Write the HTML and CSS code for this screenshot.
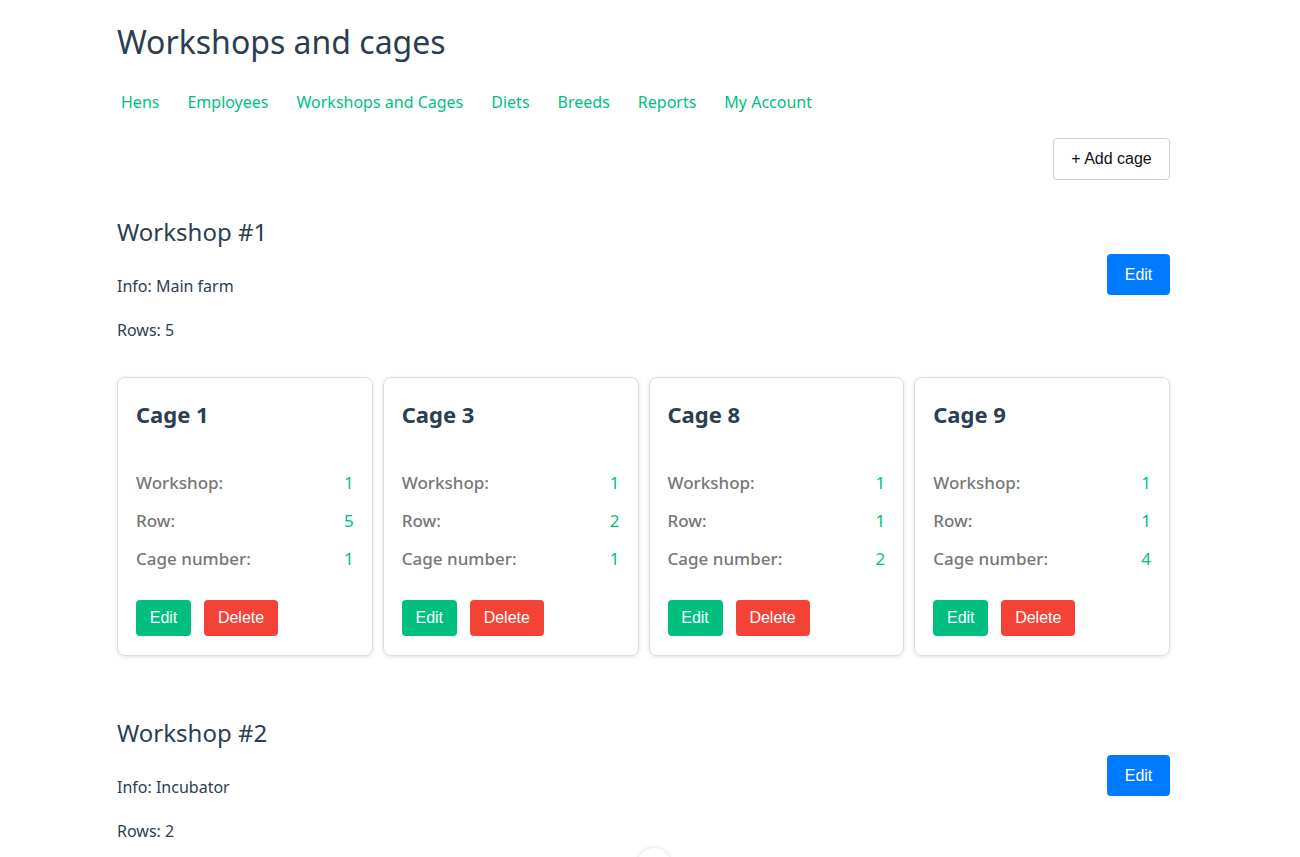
FILE: index.html
```html
<!DOCTYPE html>
<html lang="en">
<head>
<meta charset="utf-8">
<title>Workshops and cages</title>
<link rel="stylesheet" href="styles.css">
</head>
<body>
<div class="page">
  <h1 class="title">Workshops and cages</h1>
  <nav class="nav">
    <a href="#">Hens</a>
    <a href="#">Employees</a>
    <a href="#">Workshops and Cages</a>
    <a href="#">Diets</a>
    <a href="#">Breeds</a>
    <a href="#">Reports</a>
    <a href="#">My Account</a>
  </nav>
  <div class="toolbar">
    <button class="btn btn-outline">+ Add cage</button>
  </div>

  <section class="workshop">
    <div class="ws-head">
      <div class="ws-info">
        <h2 class="ws-title">Workshop #1</h2>
        <p class="ws-line">Info: Main farm</p>
        <p class="ws-line">Rows: 5</p>
      </div>
      <button class="btn btn-blue">Edit</button>
    </div>
    <div class="cages">
      <div class="card">
        <h3 class="card-title">Cage 1</h3>
        <div class="field"><span class="label">Workshop:</span><span class="value">1</span></div>
        <div class="field"><span class="label">Row:</span><span class="value">5</span></div>
        <div class="field"><span class="label">Cage number:</span><span class="value">1</span></div>
        <div class="actions"><button class="btn btn-green">Edit</button><button class="btn btn-red">Delete</button></div>
      </div>
      <div class="card">
        <h3 class="card-title">Cage 3</h3>
        <div class="field"><span class="label">Workshop:</span><span class="value">1</span></div>
        <div class="field"><span class="label">Row:</span><span class="value">2</span></div>
        <div class="field"><span class="label">Cage number:</span><span class="value">1</span></div>
        <div class="actions"><button class="btn btn-green">Edit</button><button class="btn btn-red">Delete</button></div>
      </div>
      <div class="card">
        <h3 class="card-title">Cage 8</h3>
        <div class="field"><span class="label">Workshop:</span><span class="value">1</span></div>
        <div class="field"><span class="label">Row:</span><span class="value">1</span></div>
        <div class="field"><span class="label">Cage number:</span><span class="value">2</span></div>
        <div class="actions"><button class="btn btn-green">Edit</button><button class="btn btn-red">Delete</button></div>
      </div>
      <div class="card">
        <h3 class="card-title">Cage 9</h3>
        <div class="field"><span class="label">Workshop:</span><span class="value">1</span></div>
        <div class="field"><span class="label">Row:</span><span class="value">1</span></div>
        <div class="field"><span class="label">Cage number:</span><span class="value">4</span></div>
        <div class="actions"><button class="btn btn-green">Edit</button><button class="btn btn-red">Delete</button></div>
      </div>
    </div>
  </section>

  <section class="workshop workshop-2">
    <div class="ws-head">
      <div class="ws-info">
        <h2 class="ws-title">Workshop #2</h2>
        <p class="ws-line">Info: Incubator</p>
        <p class="ws-line">Rows: 2</p>
      </div>
      <button class="btn btn-blue">Edit</button>
    </div>
  </section>
</div>
<div class="float-btn"></div>
</body>
</html>
```

FILE: styles.css
```css
html { overflow: hidden; }
body {
  margin: 0;
  padding-right: 13px;
  background: #fff;
  font-family: "Noto Sans", "Open Sans", sans-serif;
  color: #2c3e50;
}
.page {
  width: 1053px;
  margin: 0 auto;
}
.title {
  margin: 0;
  padding-top: 20px;
  font-size: 32px;
  font-weight: 400;
  line-height: 44px;
}
.nav {
  display: flex;
  gap: 20px;
  margin-top: 26px;
}
.nav a {
  padding: 0 4px;
  color: #00bf80;
  text-decoration: none;
  font-size: 16px;
  line-height: 24px;
}
.toolbar {
  display: flex;
  justify-content: flex-end;
  margin-top: 24px;
}
.btn {
  font-family: "Liberation Sans", Arial, sans-serif;
  font-size: 16px;
  border: none;
  border-radius: 4px;
  cursor: pointer;
}
.btn-outline {
  width: 117px;
  height: 42px;
  background: #fff;
  color: #111;
  border: 1px solid #cfcfcf;
}
.btn-blue {
  width: 63px;
  height: 41px;
  background: #007bff;
  color: #fff;
  margin-top: 38px;
}
.btn-green {
  width: 55px;
  height: 36px;
  background: #00bf7f;
  color: #fff;
}
.btn-red {
  width: 74px;
  height: 36px;
  background: #f44336;
  color: #fff;
}
.workshop { margin-top: 36px; }
.ws-head {
  display: flex;
  justify-content: space-between;
  align-items: flex-start;
}
.ws-title {
  margin: 0;
  padding-bottom: 5px;
  font-size: 24px;
  font-weight: 400;
  line-height: 32px;
}
.ws-line {
  margin: 22px 0 0;
  font-size: 16px;
  line-height: 22px;
}
.cages {
  display: grid;
  grid-template-columns: repeat(4, 1fr);
  gap: 10px;
  margin-top: 36px;
}
.card {
  border: 1px solid #ddd;
  border-radius: 8px;
  box-shadow: 0 1px 4px rgba(0,0,0,0.12);
  padding: 21px 18px 19px;
}
.card-title {
  margin: 0 0 42px;
  font-size: 22px;
  font-weight: 700;
  line-height: 30px;
}
.field {
  display: flex;
  justify-content: space-between;
  font-size: 17px;
  line-height: 24px;
  margin-bottom: 14px;
}
.label { color: #777; font-weight: 500; }
.value { color: #00bf80; }
.actions {
  display: flex;
  gap: 13px;
  margin-top: 29px;
}
.workshop-2 { margin-top: 61px; }
.float-btn {
  position: absolute;
  left: 637px;
  top: 848px;
  width: 34px;
  height: 34px;
  border-radius: 50%;
  background: #fff;
  box-shadow: 0 0 4px rgba(0,0,0,0.15);
}
```
